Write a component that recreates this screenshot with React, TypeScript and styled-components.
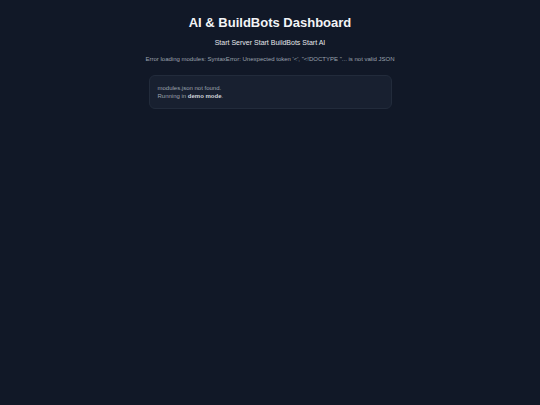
import React from "react";
import styled, { createGlobalStyle } from "styled-components";

const Global = createGlobalStyle`
  html, body { margin: 0; padding: 0; background: #111827; }
  body { font-family: "Liberation Sans", Arial, sans-serif; }
`;

const Page = styled.div`
  min-height: 405px;
  background: #111827;
  display: flex;
  flex-direction: column;
  align-items: center;
  padding-top: 15px;
  box-sizing: border-box;
`;

const Title = styled.h1`
  margin: 0;
  font-size: 13px;
  font-weight: 700;
  color: #f3f4f6;
  line-height: 16px;
`;

const Actions = styled.div`
  margin-top: 6.5px;
  display: flex;
  gap: 2px;
`;

const ActionButton = styled.button`
  background: none;
  border: none;
  padding: 0;
  font-family: inherit;
  font-size: 7px;
  line-height: 9px;
  color: #e5e7eb;
  cursor: pointer;
`;

const ErrorText = styled.p`
  margin: 8.5px 0 0;
  font-size: 6px;
  line-height: 8px;
  color: #9ca3af;
`;

const Card = styled.div`
  margin-top: 12px;
  width: 243px;
  box-sizing: border-box;
  padding: 7.5px 8px 8.5px;
  background: #182030;
  border: 1px solid #222b3b;
  border-radius: 6px;
  font-size: 6px;
  line-height: 8px;
  color: #9ca3af;
  b { color: #d1d5db; }
`;

export default function App() {
  return (
    <>
      <Global />
      <Page>
        <Title>AI &amp; BuildBots Dashboard</Title>
        <Actions>
          <ActionButton>Start Server</ActionButton>
          <ActionButton>Start BuildBots</ActionButton>
          <ActionButton>Start AI</ActionButton>
        </Actions>
        <ErrorText>
          Error loading modules: SyntaxError: Unexpected token '&lt;', "&lt;!DOCTYPE "... is not valid JSON
        </ErrorText>
        <Card>
          modules.json not found.
          <br />
          Running in <b>demo mode</b>.
        </Card>
      </Page>
    </>
  );
}
